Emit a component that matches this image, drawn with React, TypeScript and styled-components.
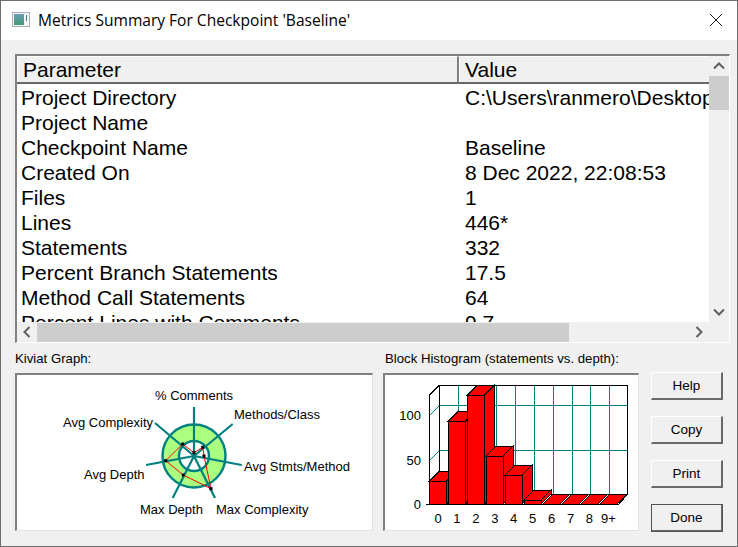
import React from "react";
import styled, { createGlobalStyle } from "styled-components";

const Global = createGlobalStyle`
  html, body {
    margin: 0;
    padding: 0;
    background: #f0f0f0;
  }
  * {
    box-sizing: border-box;
  }
`;

const Window = styled.div`
  width: 738px;
  height: 547px;
  border: 1px solid #6e6e6e;
  background: #f0f0f0;
  display: flex;
  flex-direction: column;
  overflow: hidden;
`;

const TitleBar = styled.div`
  height: 39px;
  flex: none;
  background: #fff;
  display: flex;
  align-items: center;
  padding: 0 0 2px 11px;
`;

const TitleText = styled.div`
  font-family: "Open Sans", sans-serif;
  font-size: 15.55px;
  color: #000;
  margin-left: 8px;
  white-space: nowrap;
  flex-grow: 1;
`;

const CloseButton = styled.div`
  width: 46px;
  display: flex;
  justify-content: center;
  padding-left: 3px;
`;

const Content = styled.div`
  flex-grow: 1;
  padding: 14px 7px 15px 14px;
  display: flex;
  flex-direction: column;
`;

const ListFrame = styled.div`
  width: 715px;
  height: 289px;
  flex: none;
  border-top: 2px solid #808080;
  border-left: 2px solid #808080;
  border-right: 1px solid #fff;
  border-bottom: 1px solid #fff;
  display: grid;
  grid-template-columns: 692px 20px;
  grid-template-rows: 266px 20px;
  background: #f0f0f0;
`;

const ListPane = styled.div`
  overflow: hidden;
  background: #fff;
  font-family: "Liberation Sans", sans-serif;
  font-size: 21px;
  color: #000;
`;

const HeaderRow = styled.div`
  height: 28px;
  margin-bottom: 1px;
  display: grid;
  grid-template-columns: 442px 250px;
  border-bottom: 2px solid #696969;
`;

const HeaderCell = styled.div`
  background: #f0f0f0;
  border-top: 1px solid #fff;
  border-left: 1px solid #fff;
  border-right: 2px solid #808080;
  padding-left: 5px;
  line-height: 25px;
  &:last-child {
    border-right: none;
    padding-left: 5px;
  }
`;

const Row = styled.div`
  height: 25px;
  display: grid;
  grid-template-columns: 444px 1fr;
  line-height: 25px;
  white-space: nowrap;
`;

const ParamCell = styled.div`
  padding-left: 4px;
`;

const ValueCell = styled.div`
  padding-left: 4px;
`;

const ScrollTrackV = styled.div`
  background: #f0f0f0;
  display: flex;
  flex-direction: column;
  justify-content: space-between;
`;

const ScrollTrackH = styled.div`
  background: #f0f0f0;
  display: flex;
  align-items: center;
`;

const ArrowBox = styled.div`
  width: 20px;
  height: 20px;
  flex: none;
  display: flex;
  align-items: center;
  justify-content: center;
`;

const ThumbV = styled.div`
  height: 34px;
  background: #cdcdcd;
`;

const ThumbH = styled.div`
  width: 532px;
  height: 19px;
  background: #cdcdcd;
`;

const Spacer = styled.div`
  flex-grow: 1;
`;

const Corner = styled.div`
  background: #f0f0f0;
`;

const Lower = styled.div`
  display: flex;
  margin-top: 9px;
`;

const Section = styled.div<{ $width: number }>`
  width: ${p => p.$width}px;
  flex: none;
  margin-right: 10px;
`;

const SectionLabel = styled.div<{ $indent?: number }>`
  font-family: "Liberation Sans", sans-serif;
  font-size: 13.2px;
  line-height: 13px;
  height: 21px;
  padding-left: ${p => p.$indent || 0}px;
  color: #000;
  white-space: nowrap;
`;

const ChartFrame = styled.div`
  height: 158px;
  background: #fff;
  border-top: 2px solid #808080;
  border-left: 2px solid #808080;
  border-right: 1px solid #e3e3e3;
  border-bottom: 1px solid #e3e3e3;
  overflow: hidden;

  svg {
    display: block;
  }
`;

const Buttons = styled.div`
  display: flex;
  flex-direction: column;
  gap: 16px;
  margin-top: 20px;
  margin-left: 2px;
`;

const Button = styled.div<{ $default?: boolean }>`
  width: 72px;
  height: 28px;
  background: #f0f0f0;
  font-family: "Liberation Sans", sans-serif;
  font-size: 13.5px;
  color: #000;
  display: flex;
  align-items: center;
  justify-content: center;
  border-top: 1px solid #fff;
  border-left: 1px solid #fff;
  border-right: 2px solid #696969;
  border-bottom: 2px solid #696969;
  outline: ${p => (p.$default ? "1px solid #555" : "none")};
  outline-offset: -1px;
`;

const chartText = {
  fontFamily: '"Liberation Sans", sans-serif',
  fontSize: 13,
  fill: "#000"
};

const rows: [string, string][] = [
  ["Project Directory", "C:\\Users\\ranmero\\Desktop\\metrics"],
  ["Project Name", ""],
  ["Checkpoint Name", "Baseline"],
  ["Created On", "8 Dec 2022, 22:08:53"],
  ["Files", "1"],
  ["Lines", "446*"],
  ["Statements", "332"],
  ["Percent Branch Statements", "17.5"],
  ["Method Call Statements", "64"],
  ["Percent Lines with Comments", "9.7"]
];

function Chevron({ points }: { points: string }) {
  return (
    <svg width="12" height="12" viewBox="0 0 12 12">
      <polyline
        points={points}
        fill="none"
        stroke="#606060"
        strokeWidth="2"
      />
    </svg>
  );
}

// offsets below are relative to the inside of the chart frame (17,375)
const kiviatCenter = { x: 177, y: 81 };
const spokes = [
  [177, 32],
  [215.7, 49],
  [224.7, 90],
  [198, 123],
  [155.7, 123],
  [129, 90],
  [138, 48]
];
const redPoints = [
  [177, 77.7],
  [185.7, 72.3],
  [187, 81],
  [194, 113.7],
  [166.3, 100],
  [148.7, 85.7],
  [165.7, 69]
];

function Kiviat() {
  return (
    <svg width="356" height="155">
      <circle
        cx={kiviatCenter.x}
        cy={kiviatCenter.y}
        r={31.5}
        fill="#aaff80"
        stroke="#008080"
        strokeWidth="2.4"
      />
      <circle
        cx={kiviatCenter.x}
        cy={kiviatCenter.y}
        r={15}
        fill="#fff"
        stroke="#008080"
        strokeWidth="2.4"
      />
      {spokes.map(([x, y], i) => (
        <line
          key={i}
          x1={kiviatCenter.x}
          y1={kiviatCenter.y}
          x2={x}
          y2={y}
          stroke="#008080"
          strokeWidth="2.2"
        />
      ))}
      <polygon
        points={redPoints.map(p => p.join(",")).join(" ")}
        fill="none"
        stroke="#ff0000"
        strokeWidth="1"
      />
      {redPoints.map(([x, y], i) => (
        <rect key={i} x={x - 1.5} y={y - 1.5} width="3" height="3" fill="#000" />
      ))}
      <text {...chartText} x={177} y={25} textAnchor="middle">
        % Comments
      </text>
      <text {...chartText} x={217} y={44}>
        Methods/Class
      </text>
      <text {...chartText} x={227} y={96}>
        Avg Stmts/Method
      </text>
      <text {...chartText} x={199} y={139}>
        Max Complexity
      </text>
      <text {...chartText} x={123} y={139}>
        Max Depth
      </text>
      <text {...chartText} x={67} y={104}>
        Avg Depth
      </text>
      <text {...chartText} x={46} y={52}>
        Avg Complexity
      </text>
    </svg>
  );
}

// histogram coordinates, inside of the frame starts at (385,375)
const FX = 44.5;
const FY = 129;
const BAR_STEP = 18.93;
const BAR_WIDTH = 17;
const DX = 10;
const DY = 10;
const barHeights = [23, 83, 109, 48, 29, 4, 0, 0, 0, 0];
const tickLabels = ["0", "1", "2", "3", "4", "5", "6", "7", "8", "9+"];

function Bar({ index, height }: { index: number; height: number }) {
  const x = FX + index * BAR_STEP;
  const top = FY - height;
  const clip = top - DY < 10 ? 10 - (top - DY) : 0;
  const d = DX - clip;
  const topBackY = top - d;
  const sidePath = `${x + BAR_WIDTH},${top} ${x + BAR_WIDTH + d},${topBackY} ${
    x + BAR_WIDTH + DX
  },${FY - DY} ${x + BAR_WIDTH},${FY}`;
  const topPath = `${x},${top} ${x + d},${topBackY} ${x + BAR_WIDTH + d},${topBackY} ${
    x + BAR_WIDTH
  },${top}`;
  return (
    <g stroke="#000" strokeWidth="1" fill="#ff0000" shapeRendering="crispEdges">
      <polygon points={sidePath} />
      <polygon points={topPath} />
      {height > 0 && <rect x={x} y={top} width={BAR_WIDTH} height={height} />}
    </g>
  );
}

function Histogram() {
  const backX = FX + DX;
  const backY = FY - DY;
  const backRight = backX + BAR_STEP * 10 - 1;
  return (
    <svg width="254" height="155">
      <g shapeRendering="crispEdges">
        {Array.from({ length: 9 }).map((_, i) => (
          <line
            key={i}
            x1={backX + (i + 1) * BAR_STEP}
            y1={10}
            x2={backX + (i + 1) * BAR_STEP}
            y2={backY}
            stroke="#008080"
          />
        ))}
        {[30.5, 75.5].map(y => (
          <g key={y} stroke="#008080">
            <line x1={backX} y1={y} x2={backRight} y2={y} />
            <line x1={FX} y1={y + DY} x2={backX} y2={y} />
          </g>
        ))}
        <g stroke="#000" fill="none">
          <rect x={backX} y={10.5} width={backRight - backX} height={backY - 10} />
          <line x1={FX} y1={20} x2={FX} y2={FY} />
          <line x1={FX} y1={20} x2={backX} y2={10} />
          <line x1={FX - 4} y1={FY} x2={FX + BAR_STEP * 10} y2={FY} />
          <line x1={FX} y1={FY} x2={backX} y2={backY} />
          <line x1={FX + BAR_STEP * 10} y1={FY} x2={backRight} y2={backY} />
        </g>
      </g>
      {barHeights.map((h, i) => (
        <Bar key={i} index={i} height={h} />
      ))}
      <text {...chartText} x={36} y={45} textAnchor="end">
        100
      </text>
      <text {...chartText} x={36} y={90} textAnchor="end">
        50
      </text>
      <text {...chartText} x={36} y={134} textAnchor="end">
        0
      </text>
      {tickLabels.map((t, i) => (
        <text
          key={t}
          {...chartText}
          x={53 + i * BAR_STEP}
          y={148}
          textAnchor="middle"
        >
          {t}
        </text>
      ))}
    </svg>
  );
}

export default function App() {
  return (
    <Window>
      <Global />
      <TitleBar>
        <svg width="18" height="15" viewBox="0 0 18 15">
          <defs>
            <linearGradient id="appIcon" x1="0" y1="0" x2="0" y2="1">
              <stop offset="0" stopColor="#6a9fb8" />
              <stop offset="1" stopColor="#3f9a70" />
            </linearGradient>
          </defs>
          <rect x="0.5" y="0.5" width="17" height="14" fill="#f4f6f8" stroke="#a8b0b6" />
          <rect x="2" y="2" width="10" height="11" fill="url(#appIcon)" />
          <rect x="14" y="3" width="1" height="6" fill="#3b7f8a" />
        </svg>
        <TitleText>Metrics Summary For Checkpoint 'Baseline'</TitleText>
        <CloseButton>
          <svg width="14" height="14" viewBox="0 0 14 14">
            <path d="M1 1 L13 13 M13 1 L1 13" stroke="#1a1a1a" strokeWidth="1" fill="none" />
          </svg>
        </CloseButton>
      </TitleBar>
      <Content>
        <ListFrame>
          <ListPane>
            <HeaderRow>
              <HeaderCell>Parameter</HeaderCell>
              <HeaderCell>Value</HeaderCell>
            </HeaderRow>
            {rows.map(([param, value]) => (
              <Row key={param}>
                <ParamCell>{param}</ParamCell>
                <ValueCell>{value}</ValueCell>
              </Row>
            ))}
          </ListPane>
          <ScrollTrackV>
            <ArrowBox>
              <Chevron points="1,8.5 6,3.5 11,8.5" />
            </ArrowBox>
            <ThumbV />
            <Spacer />
            <ArrowBox>
              <Chevron points="1,3.5 6,8.5 11,3.5" />
            </ArrowBox>
          </ScrollTrackV>
          <ScrollTrackH>
            <ArrowBox>
              <Chevron points="8.5,1 3.5,6 8.5,11" />
            </ArrowBox>
            <ThumbH />
            <Spacer />
            <ArrowBox>
              <Chevron points="3.5,1 8.5,6 3.5,11" />
            </ArrowBox>
          </ScrollTrackH>
          <Corner />
        </ListFrame>
        <Lower>
          <Section $width={358}>
            <SectionLabel>Kiviat Graph:</SectionLabel>
            <ChartFrame>
              <Kiviat />
            </ChartFrame>
          </Section>
          <Section $width={256}>
            <SectionLabel $indent={2}>
              Block Histogram (statements vs. depth):
            </SectionLabel>
            <ChartFrame>
              <Histogram />
            </ChartFrame>
          </Section>
          <Buttons>
            <Button>Help</Button>
            <Button>Copy</Button>
            <Button>Print</Button>
            <Button $default>Done</Button>
          </Buttons>
        </Lower>
      </Content>
    </Window>
  );
}
